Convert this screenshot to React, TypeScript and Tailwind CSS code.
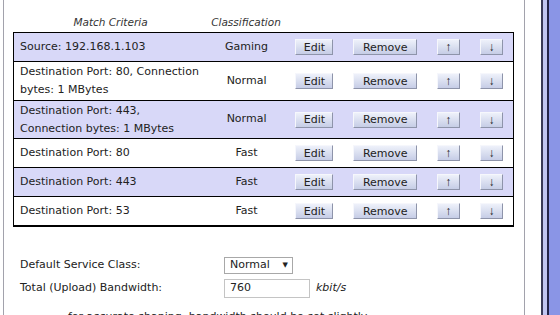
import React from 'react';

type Rule = {
  lines: string[];
  classification: string;
  height: string;
  shaded: boolean;
  last?: boolean;
};

const rules: Rule[] = [
  { lines: ['Source: 192.168.1.103'], classification: 'Gaming', height: 'h-[29px]', shaded: true },
  {
    lines: ['Destination Port: 80, Connection', 'bytes: 1 MBytes'],
    classification: 'Normal',
    height: 'h-[39px]',
    shaded: false,
  },
  {
    lines: ['Destination Port: 443,', 'Connection bytes: 1 MBytes'],
    classification: 'Normal',
    height: 'h-[38px]',
    shaded: true,
  },
  { lines: ['Destination Port: 80'], classification: 'Fast', height: 'h-[29px]', shaded: false },
  { lines: ['Destination Port: 443'], classification: 'Fast', height: 'h-[29px]', shaded: true },
  { lines: ['Destination Port: 53'], classification: 'Fast', height: 'h-[30px]', shaded: false, last: true },
];

const RouterButton = ({ label, width, arrow }: { label: string; width: string; arrow?: boolean }) => {
  return (
    <button
      type="button"
      className={`${width} h-[16px] flex items-center justify-center ${
        arrow ? "font-['Liberation_Sans'] text-[12px]" : 'text-[11px]'
      } leading-none text-[#222] bg-linear-to-b from-[#eef1fa] to-[#c6cde6] border border-t-[#f6f7fc] border-l-[#f6f7fc] border-r-[#8e94aa] border-b-[#8e94aa]`}
    >
      {label}
    </button>
  );
};

const RuleRow = ({ rule }: { rule: Rule }) => {
  return (
    <div
      className={`${rule.height} flex items-center border-black ${rule.last ? 'border-b-2' : 'border-b'} ${
        rule.shaded ? 'bg-[#d8d8f8]' : 'bg-white'
      }`}
    >
      <div className="w-[195px] pl-[6px] leading-[18px]">
        {rule.lines.map((line) => (
          <div key={line} className="whitespace-nowrap">
            {line}
          </div>
        ))}
      </div>
      <div className="w-[76px] text-center">{rule.classification}</div>
      <div className="w-[60px] flex justify-center">
        <RouterButton label="Edit" width="w-[38px]" />
      </div>
      <div className="w-[82px] flex justify-center">
        <RouterButton label="Remove" width="w-[64px]" />
      </div>
      <div className="w-[44px] flex justify-center">
        <RouterButton label="↑" width="w-[23px]" arrow />
      </div>
      <div className="w-[43px] flex justify-center">
        <RouterButton label="↓" width="w-[23px]" arrow />
      </div>
    </div>
  );
};

export default function App() {
  return (
    <div
      className="w-[560px] h-[315px] overflow-hidden flex bg-white text-[11px] text-[#222]"
      style={{ fontFamily: '"DejaVu Sans", Verdana, sans-serif' }}
    >
      <div className="w-[3px] shrink-0" />
      {/* main panel */}
      <div className="w-[522px] shrink-0 border-l border-r border-[#a2a2ac] flex flex-col">
        <div className="h-[32px] shrink-0 pt-[15px] flex text-[#333] italic text-[10.5px] leading-[14px] pl-[9px]">
          <div className="w-[195px] text-center">Match Criteria</div>
          <div className="w-[76px] text-center">Classification</div>
        </div>

        <div className="ml-[9px] w-[501px] border-t border-l border-r border-black">
          {rules.map((rule) => (
            <RuleRow key={rule.lines.join(' ')} rule={rule} />
          ))}
        </div>

        <div className="pl-[16px] mt-[30px] flex flex-col gap-[5px]">
          <div className="flex items-center h-[17px]">
            <div className="w-[204px]">Default Service Class:</div>
            <div className="w-[69px] h-[17px] border border-[#a8a8a8] flex items-center justify-between pl-[5px] pr-[4px]">
              <span>Normal</span>
              <span className="text-[7px] leading-none">▼</span>
            </div>
          </div>
          <div className="flex items-center h-[19px]">
            <div className="w-[204px]">Total (Upload) Bandwidth:</div>
            <div className="w-[86px] h-[19px] border border-[#c4c4c4] flex items-center pl-[5px]">760</div>
            <span className="ml-[6px] italic">kbit/s</span>
          </div>
          <p className="pl-[48px] mt-[7px] whitespace-nowrap leading-[14px]">
            for accurate shaping, bandwidth should be set slightly
          </p>
        </div>
      </div>

      {/* right frame edge */}
      <div className="w-[16px] shrink-0" />
      <div className="w-[2px] shrink-0 bg-[#3a3a58]" />
      <div className="w-[4px] shrink-0 bg-[#c2c6f2]" />
      <div className="w-[2px] shrink-0 bg-[#24244a]" />
      <div className="flex-1 bg-[#8a95e6]" />
    </div>
  );
}
